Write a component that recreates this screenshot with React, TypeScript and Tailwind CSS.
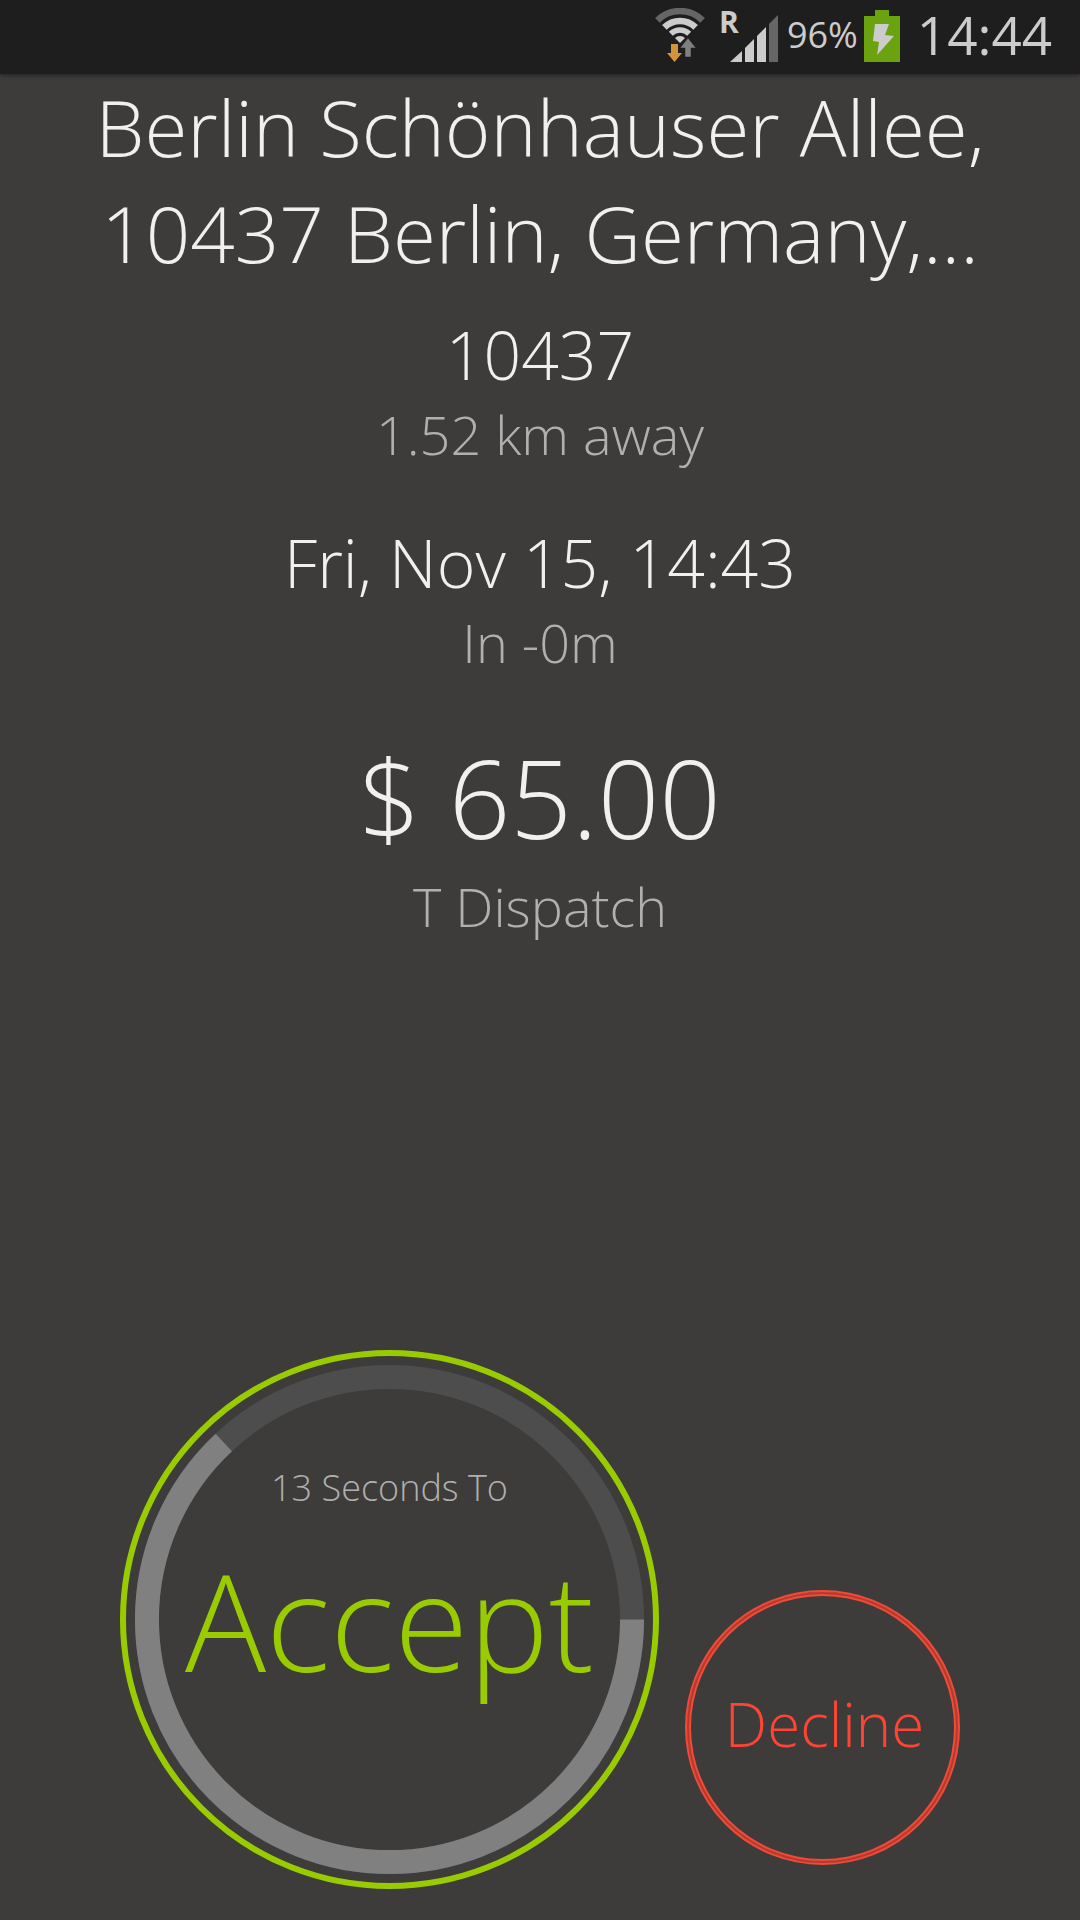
import React from 'react';

const WifiIcon: React.FC = () => (
  <svg viewBox="0 0 54 54" className="w-[54px] h-[54px]" fill="none" aria-hidden="true">
    <path d="M4.4 12.4 A32 32 0 0 1 49.6 12.4" stroke="#666" strokeWidth="6.5" />
    <path d="M11.4 19.4 A22 22 0 0 1 42.6 19.4" stroke="#ccc" strokeWidth="6.5" />
    <path d="M17.8 25.8 A13 13 0 0 1 36.2 25.8" stroke="#ccc" strokeWidth="5.5" />
    <path d="M22 30 A7 7 0 0 1 32 30 L27 35 Z" fill="#ccc" />
    {/* Traffic arrows */}
    <path d="M18 36h7v9h4l-7.5 9-7.5-9h4z" fill="#d2943a" />
    <path d="M32 49h6v-9h5l-8-10-8 10h5z" fill="#808080" stroke="#1e1e1e" strokeWidth="0.5" />
  </svg>
);

const SignalIcon: React.FC = () => (
  <svg viewBox="0 0 58 54" className="w-[58px] h-[54px]" aria-hidden="true">
    <path d="M9 54 L21 43 V54 Z" fill="#ccc" />
    <path d="M24 40 L33 31 V54 H24 Z" fill="#ccc" />
    <path d="M36 28 L45 19 V54 H36 Z" fill="#ccc" />
    <path d="M48 16 L57 7 V54 H48 Z" fill="#666" />
  </svg>
);

const BatteryIcon: React.FC = () => (
  <svg viewBox="0 0 36 54" className="w-9 h-[54px]" aria-hidden="true">
    <path d="M11 2h14v6h11v46H0V8h11z" fill="#6ba210" />
    <path d="M11 16h14l-4 11 9 1L13 47l2-13-6-1z" fill="#ccc" />
  </svg>
);

const StatusBar: React.FC = () => (
  <header className="flex h-[74px] items-center justify-end bg-[#1e1e1e] pr-7 pb-1 text-[#ccc] shadow-[0_2px_3px_#2a2928]">
    <WifiIcon />
    <div className="relative ml-3.5">
      <SignalIcon />
      <span className="absolute -left-0.5 top-0 text-[30px] leading-7 font-bold">R</span>
    </div>
    <span className="ml-2 text-[36px]">96%</span>
    <div className="ml-1.5">
      <BatteryIcon />
    </div>
    <time className="ml-[17px] text-[53px]">14:44</time>
  </header>
);

const RADIUS = 243;
const PROGRESS = 0.63;

const Countdown: React.FC = () => {
  const length = 2 * Math.PI * RADIUS;
  return (
    <svg viewBox="0 0 540 540" className="absolute inset-0 w-full h-full" fill="none" aria-hidden="true">
      <circle cx="270" cy="270" r="267" stroke="#99cc00" strokeWidth="6" />
      <circle cx="270" cy="270" r={RADIUS} stroke="#4d4d4d" strokeWidth="24" />
      <circle
        cx="270"
        cy="270"
        r={RADIUS}
        stroke="#808080"
        strokeWidth="24"
        strokeDasharray={`${length * PROGRESS} ${length}`}
      />
    </svg>
  );
};

const App: React.FC = () => {
  return (
    <div className="flex min-h-screen flex-col bg-[#3e3c3a] font-['Open_Sans',sans-serif]">
      <StatusBar />

      {/* Job details */}
      <main className="flex grow flex-col gap-12 text-center font-light text-[#f0f0ee]">
        <section>
          <h1 className="mx-auto line-clamp-2 max-w-[960px] text-[78px] leading-[106px]">
            Berlin Schönhauser Allee, 10437 Berlin, Germany,...
          </h1>
          <p className="mt-6 text-[66px] leading-[88px]">10437</p>
          <p className="text-[54px] leading-[72px] text-[#b0b0ae]">1.52 km away</p>
        </section>
        <section>
          <p className="text-[66px] leading-[88px]">Fri, Nov 15, 14:43</p>
          <p className="text-[54px] leading-[72px] text-[#b0b0ae]">In -0m</p>
        </section>
        <section>
          <p className="text-[108px] leading-[144px]">$ 65.00</p>
          <p className="text-[54px] leading-[72px] text-[#b0b0ae]">T Dispatch</p>
        </section>
      </main>

      {/* Actions */}
      <footer className="flex items-end justify-center gap-[26px] pb-[31px] font-light">
        <button type="button" className="relative flex size-[539px] flex-col items-center rounded-full pt-[114px]">
          <Countdown />
          <span className="text-[36px] leading-[48px] text-[#b0b0ae]">13 Seconds To</span>
          <span className="mt-4 text-[135px] leading-[184px] text-[#99cc00]">Accept</span>
        </button>
        <button
          type="button"
          className="mb-6 flex size-[275px] items-center justify-center rounded-full border-2 border-[#f04a38] pb-2 pl-1 text-[60px] text-[#ff4433] shadow-[inset_0_0_0_2px_#b8392c,inset_0_0_0_4px_#f04a38]"
        >
          Decline
        </button>
      </footer>
    </div>
  );
};

export default App;
